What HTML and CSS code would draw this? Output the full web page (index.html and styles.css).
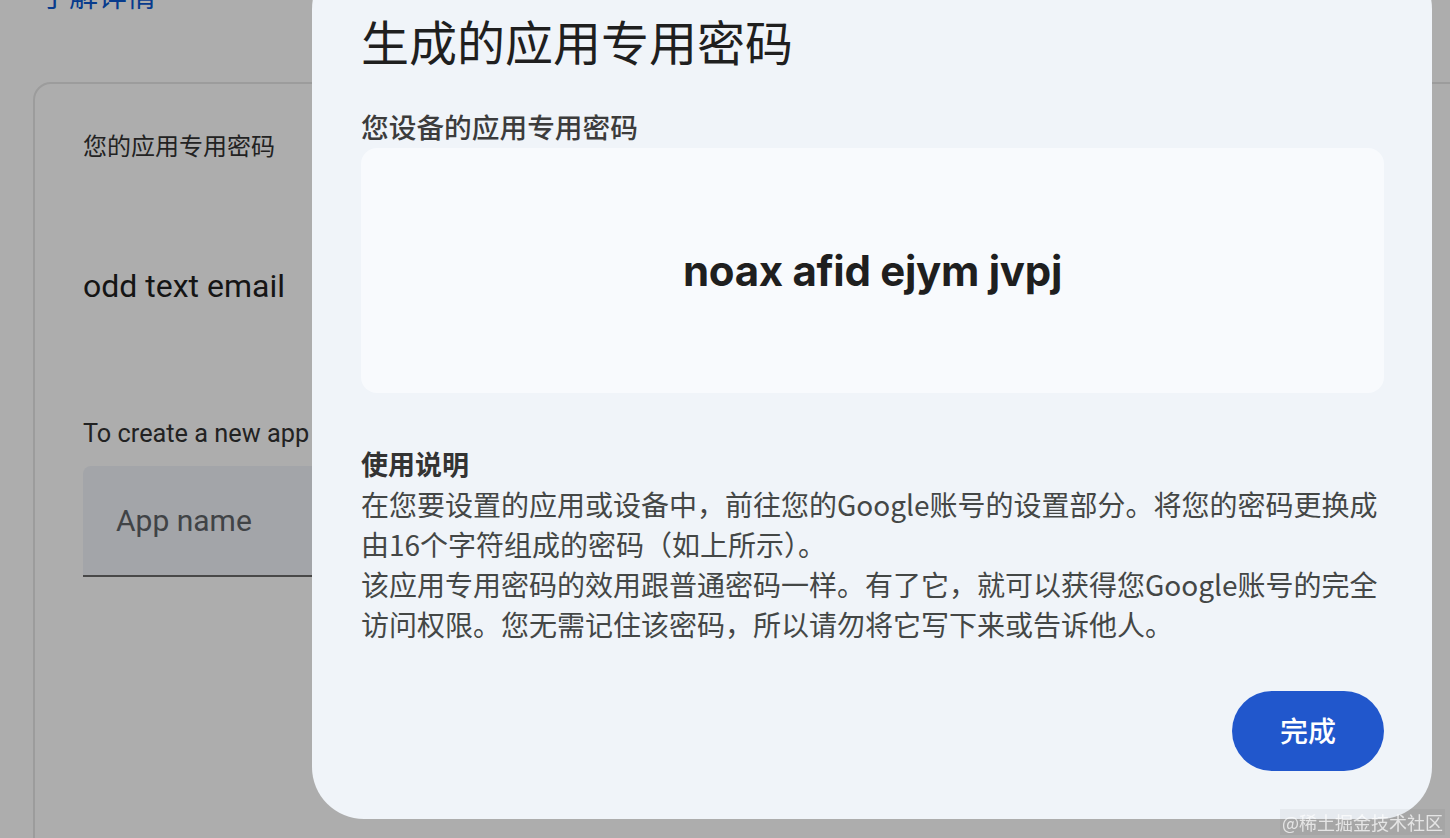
FILE: index.html
```html
<!DOCTYPE html>
<html lang="zh-CN">
<head>
  <meta charset="UTF-8">
  <meta name="viewport" content="width=device-width, initial-scale=1.0">
  <title>应用专用密码</title>
  <link rel="stylesheet" href="styles.css">
</head>

<body>
  <div class="page">
    <a class="more_link" href="#">了解详情</a>
    <div class="card">
      <div class="card_label">您的应用专用密码</div>
      <div class="app_name">odd text email</div>
      <div class="hint">To create a new app</div>
      <div class="field">
        <span class="placeholder">App name</span>
      </div>
    </div>
  </div>

  <!-- 弹窗遮罩 -->
  <div class="scrim"></div>

  <div class="dialog">
    <h1 class="dialog_title">生成的应用专用密码</h1>
    <div class="sub_title">您设备的应用专用密码</div>
    <div class="pass_box">
      <span class="pass_text">noax afid ejym jvpj</span>
    </div>
    <div class="guide">
      <div class="guide_title">使用说明</div>
      <p class="guide_text">在您要设置的应用或设备中，前往您的Google账号的设置部分。将您的密码更换成<br>由16个字符组成的密码（如上所示）。<br>该应用专用密码的效用跟普通密码一样。有了它，就可以获得您Google账号的完全<br>访问权限。您无需记住该密码，所以请勿将它写下来或告诉他人。</p>
    </div>
    <div class="actions">
      <button class="done_btn">完成</button>
    </div>
  </div>

  <div class="watermark">@稀土掘金技术社区</div>
</body>

</html>
```

FILE: styles.css
```css
body {
  margin: 0;
  width: 1450px;
  height: 838px;
  overflow: hidden;
  background-color: #ffffff;
  font-family: 'Noto Sans CJK SC', sans-serif;
  color: #1f1f1f;
}

/* 底层页面 */
.page {
  padding-left: 33px;
}

.more_link {
  display: block;
  margin: -26px 0 0 7px;
  font-size: 29px;
  line-height: 40px;
  color: #0b57d0;
  text-decoration: none;
}

.card {
  margin-top: 68px;
  width: 1500px;
  min-height: 800px;
  padding: 45px 48px 0;
  border: 2px solid #e6e6e6;
  border-radius: 18px;
}

.card_label {
  font-size: 24px;
  line-height: 32px;
  color: #333333;
}

.app_name {
  margin-top: 105px;
  font-family: Roboto, 'Noto Sans CJK SC', sans-serif;
  font-size: 32px;
  line-height: 40px;
  color: #1f1f1f;
}

.hint {
  margin-top: 112px;
  font-family: Roboto, sans-serif;
  font-size: 25.3px;
  line-height: 32px;
  color: #333333;
  white-space: nowrap;
}

.field {
  display: flex;
  align-items: center;
  margin-top: 16px;
  width: 480px;
  height: 109px;
  padding-left: 33px;
  background-color: #f0f4f9;
  border-bottom: 2px solid #6a6a6a;
  border-radius: 8px 8px 0 0;
}

.placeholder {
  font-family: Roboto, sans-serif;
  font-size: 30px;
  color: #5f6368;
}

.scrim {
  position: fixed;
  inset: 0;
  background-color: rgba(0, 0, 0, 0.32);
}

/* 弹窗 */
.dialog {
  position: fixed;
  left: 312px;
  top: -43px;
  width: 1120px;
  box-sizing: border-box;
  padding: 51px 48px 48px 49px;
  border-radius: 52px;
  background-color: #f0f4f9;
}

.dialog_title {
  margin: 0;
  font-size: 48px;
  font-weight: 400;
  line-height: 64px;
  color: #1f1f1f;
}

.sub_title {
  margin-top: 36px;
  font-size: 27.7px;
  font-weight: 500;
  line-height: 36px;
  color: #3c3c3c;
}

.pass_box {
  display: flex;
  align-items: center;
  justify-content: center;
  margin-top: 4px;
  height: 245px;
  border-radius: 16px;
  background-color: #f8fafd;
}

.pass_text {
  font-family: Inter, sans-serif;
  font-size: 42px;
  font-weight: 700;
  letter-spacing: -0.3px;
  color: #1f1f1f;
}

.guide {
  margin-top: 51px;
}

.guide_title {
  font-size: 27px;
  font-weight: 700;
  line-height: 40px;
  color: #333333;
}

.guide_text {
  margin: 0;
  font-size: 28px;
  line-height: 40px;
  color: #444746;
  white-space: nowrap;
}

.actions {
  display: flex;
  justify-content: flex-end;
  margin-top: 47px;
}

.done_btn {
  width: 152px;
  height: 80px;
  padding: 0 0 3px;
  border: none;
  border-radius: 40px;
  background-color: #2157cc;
  color: #ffffff;
  font-family: 'Noto Sans CJK SC', sans-serif;
  font-size: 28px;
  font-weight: 500;
}

.watermark {
  position: fixed;
  right: 5px;
  bottom: 3px;
  padding: 0 2px;
  font-size: 18px;
  line-height: 26px;
  color: rgba(255, 255, 255, 0.7);
  background-color: rgba(0, 0, 0, 0.04);
}
```
